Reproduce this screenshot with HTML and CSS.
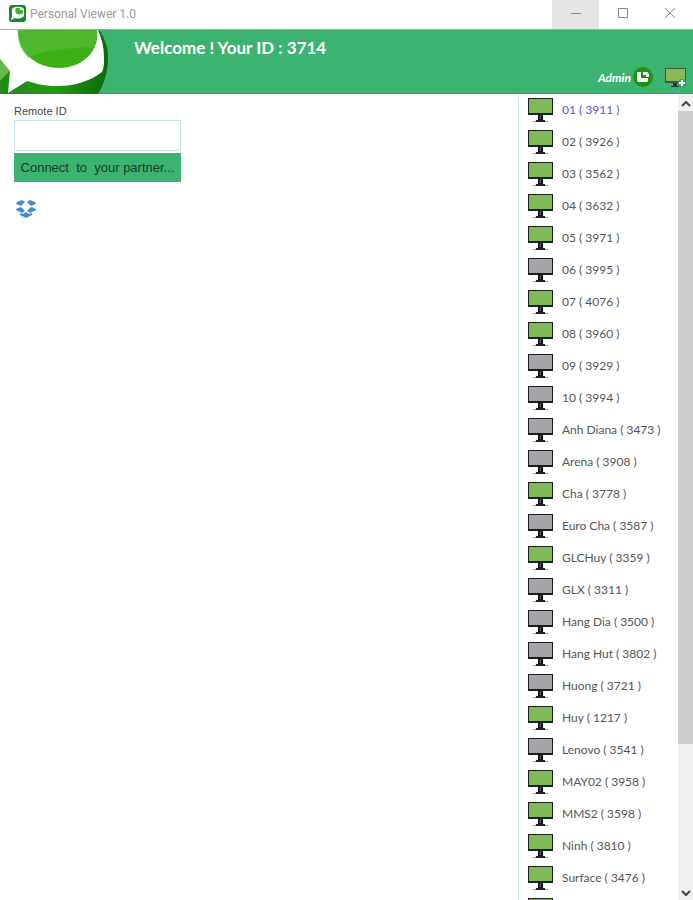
FILE: index.html
```
<!DOCTYPE html>
<html lang="en">
<head>
  <meta charset="UTF-8" />
  <meta name="viewport" content="width=device-width, initial-scale=1.0" />
  <title>Personal Viewer 1.0</title>
  <link rel="stylesheet" href="styles.css">
</head>
<body>
  <svg class="symbols" aria-hidden="true">
    <symbol id="monitor" viewBox="0 0 25 26">
      <path d="M0 1h25v17H0z" fill="#1c1c28"/>
      <path d="M1 2h23v14H1z" fill="currentColor"/>
      <path d="M10 18h5v5h-5z" fill="#111"/>
      <path d="M12 18h1v4h-1z" fill="#666"/>
      <path d="M5 24h15v1H5z" fill="#999"/>
      <path d="M8 23h9v2H8z" fill="#222"/>
    </symbol>
  </svg>

  <div class="titlebar">
    <svg class="app-icon" viewBox="0 0 17 17" aria-hidden="true">
      <rect width="17" height="17" rx="3" fill="#178a2c"/>
      <path d="M3 4c2-3 10-3 12 0v7c-3 3-7 3-9 2l-4 2 1-4z" fill="#fff"/>
      <path d="M7 3h4v2h3v3c-2 2-5 2-7 0-1-1-1-3 0-5z" fill="#43b52c"/>
    </svg>
    <span class="app-name">Personal Viewer 1.0</span>
    <button class="win-btn active" aria-label="Minimize">
      <svg viewBox="0 0 12 12"><path d="M1 6.500h10" /></svg>
    </button>
    <button class="win-btn" aria-label="Maximize">
      <svg viewBox="0 0 12 12"><path d="M1.500 1.500h9v9h-9z" /></svg>
    </button>
    <button class="win-btn" aria-label="Close">
      <svg viewBox="0 0 12 12"><path d="M1 1l10 10M11 1L1 11" /></svg>
    </button>
  </div>

  <header class="header">
    <svg class="logo" viewBox="0 0 110 64" aria-hidden="true">
      <defs>
        <linearGradient id="dark" x1="0" y1="0" x2="1" y2="0">
          <stop offset="0" stop-color="#1f8a14"/>
          <stop offset=".5" stop-color="#259a12"/>
          <stop offset="1" stop-color="#0b6a0d"/>
        </linearGradient>
        <linearGradient id="bright" x1="0" y1="0" x2="0" y2="1">
          <stop offset="0" stop-color="#3fae20"/>
          <stop offset="1" stop-color="#3cb010"/>
        </linearGradient>
      </defs>
      <path d="M0 0h99c6 8 9 18 9 28 0 14-4 26-10 36H0z" fill="url(#dark)"/>
      <path d="M0 29l10 12-10 10z" fill="#65b84c"/>
      <path d="M0 0h98c4 9 6 18 6 27 0 6 0 11-2 15-13 10-29 14-44 14-12 0-22-2-31-5L8 63l2-22L0 29z" fill="#fff"/>
      <path d="M18 0h79c3 21-15 38-38 38C35 38 17 21 18 0z" fill="url(#bright)"/>
      <path d="M18 0h79c0 8-2 13-4 17-20 1-48 2-65 11C21 20 17 12 18 0z" fill="#5cc03c" opacity=".55"/>
    </svg>
    <h1>Welcome ! Your ID : 3714</h1>
    <div class="account">
      <span>Admin</span>
      <svg class="admin-icon" viewBox="0 0 20 20" aria-hidden="true">
        <circle cx="10" cy="10" r="10" fill="#1d9410"/>
        <path d="M4 5h4v6h7v2c0 2-1 2-2 2H6c-2 0-2-1-2-3z" fill="#fff"/>
        <path d="M10 5h4l2 2v3h-3V8h-3z" fill="#fff"/>
      </svg>
      <svg class="add-icon" viewBox="0 0 22 21" aria-label="Add computer">
        <path d="M0 1h21v15H0z" fill="#4b5146"/>
        <path d="M1 2h19v12H1z" fill="#87b957"/>
        <path d="M8 16h4v3h2v1H6v-1h2z" fill="#243c34"/>
        <circle cx="17" cy="16" r="4" fill="#27a56d"/>
        <path d="M14 16h6M17 13v6" stroke="#fff" stroke-width="2"/>
      </svg>
    </div>
  </header>

  <div class="content">
    <main class="connect">
      <label for="remote">Remote ID</label>
      <input type="text" id="remote">
      <button class="connect-btn">Connect&nbsp; to&nbsp; your partner...</button>
      <svg class="dropbox" viewBox="0 0 20 18" aria-hidden="true">
        <path d="M1 2l5-2 3 2-4 4-5-2zM11 2l3-2 5 2 1 2-5 2zM0 9l5-2 4 4-3 2-6-3zM20 9l-5-2-4 4 3 2 6-3zM4 13l3 1 3-2 3 2 3-1v2l-6 3-6-3z" fill="#3f8ed2"/>
      </svg>
    </main>

    <ul class="computers" id="computers"></ul>

    <div class="scrollbar">
      <button aria-label="Scroll up"><svg viewBox="0 0 10 6"><path d="M1 5l4-4 4 4"/></svg></button>
      <div class="track"><div class="thumb"></div></div>
      <button aria-label="Scroll down"><svg viewBox="0 0 10 6"><path d="M1 1l4 4 4-4"/></svg></button>
    </div>
  </div>

  <script>
    // [label, online]
    const computers = [
      ['01 ( 3911 )', true],
      ['02 ( 3926 )', true],
      ['03 ( 3562 )', true],
      ['04 ( 3632 )', true],
      ['05 ( 3971 )', true],
      ['06 ( 3995 )', false],
      ['07 ( 4076 )', true],
      ['08 ( 3960 )', true],
      ['09 ( 3929 )', false],
      ['10 ( 3994 )', false],
      ['Anh Diana ( 3473 )', false],
      ['Arena ( 3908 )', false],
      ['Cha ( 3778 )', true],
      ['Euro Cha ( 3587 )', false],
      ['GLCHuy ( 3359 )', true],
      ['GLX ( 3311 )', false],
      ['Hang Dia ( 3500 )', false],
      ['Hang Hut ( 3802 )', false],
      ['Huong ( 3721 )', false],
      ['Huy ( 1217 )', true],
      ['Lenovo ( 3541 )', false],
      ['MAY02 ( 3958 )', true],
      ['MMS2 ( 3598 )', true],
      ['Ninh ( 3810 )', true],
      ['Surface ( 3476 )', true],
      ['', true]
    ];

    document.getElementById('computers').innerHTML = computers.map(([label, online], i) => `
      <li>
        <a href="#" class="${online ? 'online' : 'offline'}${i === 0 ? ' selected' : ''}">
          <svg class="monitor"><use href="#monitor"/></svg>
          <span>${label}</span>
        </a>
      </li>`).join('');
  </script>
</body>
</html>
```
FILE: styles.css
```
:root {
  --green: #3cb371;
  --line: #c5e4ea;
  --comic: "Comic Sans MS", Lato, sans-serif;
  --ui: Roboto, sans-serif;
}

* {
  box-sizing: border-box;
  margin: 0;
  padding: 0;
}

body {
  height: 100vh;
  display: flex;
  flex-direction: column;
  overflow: hidden;
  background: #fff;
  color: #444;
  font-family: var(--ui);
  font-size: 12px;
}

button {
  border: none;
  background: none;
  font-family: inherit;
}

.symbols {
  display: none;
}

.titlebar {
  display: flex;
  align-items: center;
  flex: none;
  height: 29px;
  padding-left: 9px;
}

.app-icon {
  width: 17px;
  height: 17px;
  margin-bottom: 2px;
}

.app-name {
  flex: 1;
  margin-left: 4px;
  padding-bottom: 2px;
  color: #999;
}

.win-btn {
  width: 47px;
  height: 29px;
}

.win-btn.active {
  background: #e5e5e5;
}

.win-btn svg {
  width: 12px;
  height: 12px;
  fill: none;
  stroke: #888;
}

.header {
  display: flex;
  flex: none;
  height: 65px;
  background: var(--green);
  border-top: 1px solid #6fc795;
  border-bottom: 1px solid #2ba565;
}

.logo {
  width: 110px;
  height: 64px;
}

.header h1 {
  flex: 1;
  margin-left: 24px;
  color: #fff;
  font-family: var(--comic);
  font-size: 17px;
  font-weight: 700;
  line-height: 36px;
}

.account {
  display: flex;
  align-items: center;
  align-self: flex-end;
  height: 32px;
  padding-right: 6px;
  color: #fff;
  font-family: var(--comic);
  font-size: 12px;
  font-style: italic;
  font-weight: 700;
}

.admin-icon {
  width: 20px;
  height: 20px;
  margin: 0 12px 0 2px;
}

.add-icon {
  width: 22px;
  height: 21px;
}

.content {
  display: flex;
  flex: 1;
  min-height: 0;
}

.connect {
  display: flex;
  flex: 1;
  flex-direction: column;
  align-items: flex-start;
  padding: 8px 14px;
}

.connect label {
  font-family: "Liberation Sans", sans-serif;
  font-size: 11px;
  line-height: 18px;
}

.connect input {
  width: 167px;
  height: 31px;
  padding: 0 6px;
  border: 1px solid var(--line);
}

.connect-btn {
  width: 167px;
  height: 29px;
  margin-top: 2px;
  background: var(--green);
  color: #143c28;
  font-family: "Liberation Sans", sans-serif;
  font-size: 13px;
  white-space: nowrap;
}

.dropbox {
  width: 20px;
  height: 18px;
  margin: 18px 0 0 2px;
}

.computers {
  width: 160px;
  overflow: hidden;
  border-left: 1px solid var(--line);
  list-style: none;
}

.computers a {
  display: flex;
  align-items: center;
  height: 32px;
  padding-left: 9px;
  font-family: var(--comic);
  font-size: 12px;
  text-decoration: none;
  white-space: nowrap;
}

.computers span {
  margin-left: 9px;
  padding-bottom: 2px;
  color: #555;
}

.computers .online {
  color: #7dbb57;
}

.computers .offline {
  color: #a5a5a5;
}

.computers .selected span {
  color: #5454f0;
}

.monitor {
  width: 25px;
  height: 26px;
}

.scrollbar {
  display: flex;
  flex-direction: column;
  width: 15px;
  background: #f0f0f0;
}

.scrollbar button {
  height: 17px;
}

.scrollbar svg {
  width: 10px;
  height: 6px;
  fill: none;
  stroke: #444;
  stroke-width: 2;
}

.track {
  flex: 1;
}

.thumb {
  height: 82%;
  background: #cdcdcd;
}
```
